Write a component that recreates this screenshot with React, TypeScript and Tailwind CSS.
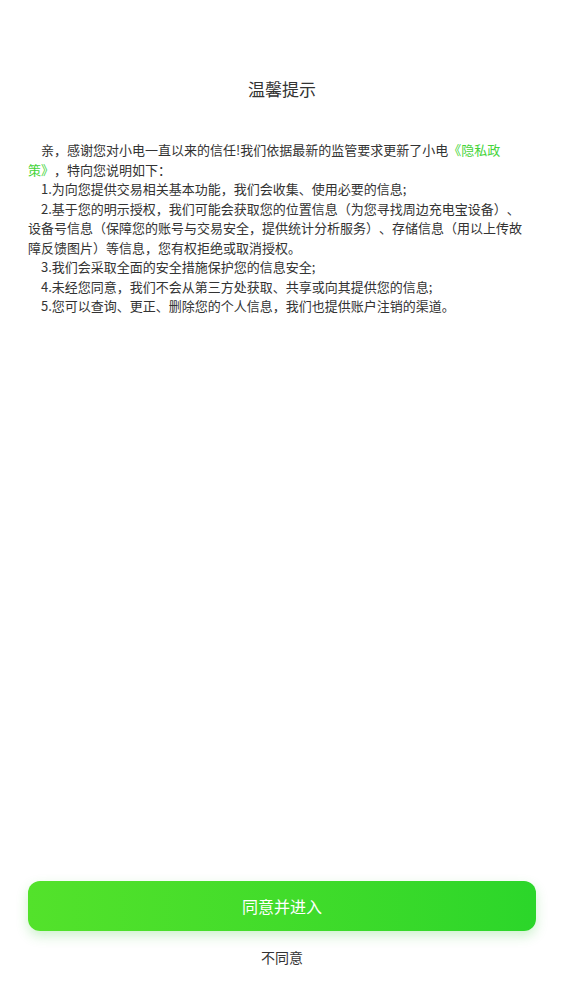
export default function App() {
  return (
    <div
      lang="zh-CN"
      className="flex h-[1004px] w-full flex-col bg-white font-['Noto_Sans_CJK_SC',sans-serif] [text-spacing-trim:space-all]"
    >
      {/* Title */}
      <h1 className="pt-[77px] text-center text-[17px] leading-[24px] text-[#333]">温馨提示</h1>

      {/* Body */}
      <div className="mt-[39px] pl-[28px] pr-[36px] text-[13px] leading-[19.5px] text-[#333]">
        <p className="indent-[13px]">
          亲，感谢您对小电一直以来的信任!我们依据最新的监管要求更新了小电
          <span className="text-[#45d43a]">《隐私政策》</span>，特向您说明如下：
        </p>
        <p className="indent-[13px]">1.为向您提供交易相关基本功能，我们会收集、使用必要的信息;</p>
        <p className="indent-[13px]">
          2.基于您的明示授权，我们可能会获取您的位置信息（为您寻找周边充电宝设备）、设备号信息（保障您的账号与交易安全，提供统计分析服务）、存储信息（用以上传故障反馈图片）等信息，您有权拒绝或取消授权。
        </p>
        <p className="indent-[13px]">3.我们会采取全面的安全措施保护您的信息安全;</p>
        <p className="indent-[13px]">4.未经您同意，我们不会从第三方处获取、共享或向其提供您的信息;</p>
        <p className="indent-[13px]">5.您可以查询、更正、删除您的个人信息，我们也提供账户注销的渠道。</p>
      </div>

      {/* Actions */}
      <div className="mt-auto flex flex-col items-center px-[28px] pb-[37px]">
        <button className="h-[50px] w-full rounded-[12px] bg-gradient-to-r from-[#53e22b] to-[#2bd62a] text-[16px] text-white shadow-[0_5px_12px_rgba(60,200,60,0.25)]">
          同意并进入
        </button>
        <button className="mt-[16px] text-[14px] leading-[20px] text-[#333]">不同意</button>
      </div>
    </div>
  );
}
